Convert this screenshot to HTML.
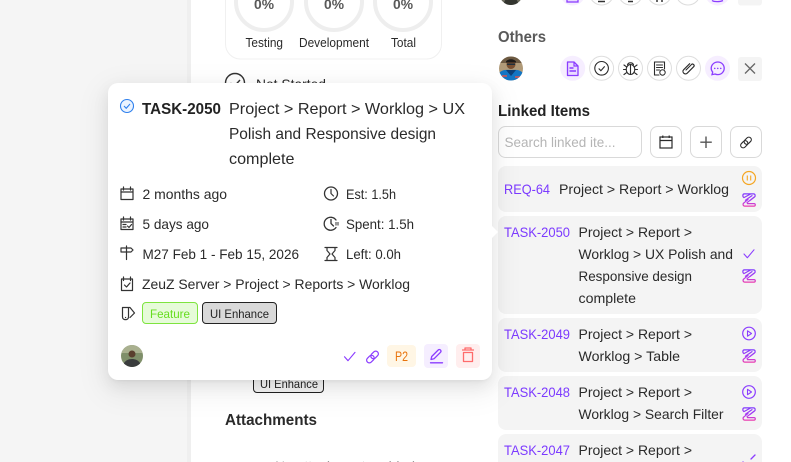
<!DOCTYPE html>
<html><head><meta charset="utf-8"><title>Task popover</title>
<style>
html,body{margin:0;padding:0;width:791px;height:462px;overflow:hidden;background:#fff}
svg{position:absolute;left:0;top:0}
svg svg{position:static}
text{font-family:"Liberation Sans",sans-serif;font-size:14px;fill:#2a2a2a}
.pop{position:absolute;left:108px;top:83px;width:384px;height:297px;background:#fff;border-radius:10px;box-shadow:0 6px 16px rgba(0,0,0,.08),0 3px 6px -4px rgba(0,0,0,.12),0 9px 28px 8px rgba(0,0,0,.05)}
.ic{fill:none;stroke:#333;stroke-width:1.2;stroke-linecap:round;stroke-linejoin:round}
.pu{fill:none;stroke:#8b3dff;stroke-width:1.3;stroke-linecap:round;stroke-linejoin:round}
.id{fill:#7c3aff}
</style></head><body>
<svg width="791" height="462" viewBox="0 0 791 462">
<defs>
<linearGradient id="zg" gradientUnits="userSpaceOnUse" x1="0" y1="0" x2="0" y2="14"><stop offset="0" stop-color="#7c3aff"/><stop offset=".6" stop-color="#b03cf0"/><stop offset="1" stop-color="#f03ca8"/></linearGradient>
<symbol id="z" viewBox="0 0 14 14" overflow="visible"><path d="M2.300 .9H11.500c1.700 0 2.200 2 1 3.100L8 7.500M2.300 .9C.6 .9.3 3.500 1.900 4.600L8.600 1M3.400 7.200 10 2.600M5 9.700 11.800 4.300M6 6.400 1.900 9.900C.5 11 1 13.100 2.600 13.100H12c1.700 0 1.700-2.500 0-2.500H5.500" fill="none" stroke="url(#zg)" stroke-width="1.200" stroke-linecap="round" stroke-linejoin="round"/></symbol>
<symbol id="chk" viewBox="0 0 14 12" overflow="visible"><path d="M1 6 5 10.500 13 1" fill="none" stroke="#8b3dff" stroke-width="1.300" stroke-linecap="round" stroke-linejoin="round"/></symbol>
<symbol id="play" viewBox="0 0 14 14" overflow="visible"><circle cx="7" cy="7" r="6.300" fill="none" stroke="#8b3dff" stroke-width="1.200"/><path d="M5.500 4.300 9.500 7 5.500 9.700Z" fill="none" stroke="#8b3dff" stroke-width="1.100" stroke-linejoin="round"/></symbol>
<clipPath id="clipA1"><circle cx="511" cy="68.500" r="12"/></clipPath>
<clipPath id="clipA2"><circle cx="511" cy="-7" r="12"/></clipPath>
<clipPath id="clipA3"><circle cx="132" cy="356" r="11"/></clipPath>
</defs>

<!-- page background -->
<rect x="0" y="0" width="187" height="462" fill="#f5f5f5"/>
<rect x="187" y="0" width="4" height="462" fill="#efefef"/>

<!-- progress card -->
<rect x="225.500" y="-30" width="216" height="89" rx="15" fill="#fff" stroke="#f0f0f0"/>
<g fill="none" stroke="#eeeeee" stroke-width="4"><circle cx="264" cy="2" r="28"/><circle cx="334" cy="2" r="28"/><circle cx="403" cy="2" r="28"/></g>
<text x="254" y="9" textLength="20" lengthAdjust="spacingAndGlyphs" style="fill:#595959;font-weight:700">0%</text>
<text x="324" y="9" textLength="20" lengthAdjust="spacingAndGlyphs" style="fill:#595959;font-weight:700">0%</text>
<text x="393" y="9" textLength="20" lengthAdjust="spacingAndGlyphs" style="fill:#595959;font-weight:700">0%</text>
<text x="245.500" y="47" textLength="37.500" lengthAdjust="spacingAndGlyphs" style="font-size:12.500px">Testing</text>
<text x="299" y="47" textLength="70" lengthAdjust="spacingAndGlyphs" style="font-size:12.500px">Development</text>
<text x="391" y="47" textLength="25" lengthAdjust="spacingAndGlyphs" style="font-size:12.500px">Total</text>

<!-- not started -->
<circle cx="235" cy="83" r="9.500" fill="none" stroke="#333" stroke-width="1.400"/>
<path d="M230.500 83 234 86.500 240 80" fill="none" stroke="#333" stroke-width="1.400"/>
<text x="256" y="89" textLength="70" lengthAdjust="spacingAndGlyphs">Not Started</text>

<!-- behind popover -->
<rect x="253.500" y="370" width="70" height="22.500" rx="3.500" fill="#f5f5f5" stroke="#222"/>
<text x="260" y="388" textLength="58" lengthAdjust="spacingAndGlyphs" style="font-size:12px;fill:#222">UI Enhance</text>
<text x="225" y="425" textLength="92" lengthAdjust="spacingAndGlyphs" style="font-size:16px;font-weight:700;fill:#2a2a2a">Attachments</text>
<text x="275" y="471" textLength="140" lengthAdjust="spacingAndGlyphs" style="fill:#999">No attachments added</text>

<!-- right column top row -->
<g clip-path="url(#clipA2)"><circle cx="511" cy="-7" r="12" fill="#6b6b5e"/><circle cx="511" cy="4" r="7" fill="#33352f"/></g>
<circle cx="572.700" cy="-7" r="12.500" fill="#f6eeff"/>
<rect x="567" y="-4" width="11" height="6" fill="#e9d9ff" stroke="#8b3dff" stroke-width="1.300"/>
<g fill="#fff" stroke="#dcdcdc"><circle cx="601.600" cy="-7" r="12"/><circle cx="630.500" cy="-7" r="12"/><circle cx="659.500" cy="-7" r="12"/><circle cx="688" cy="-7" r="12"/></g>
<path d="M598 1.500h7M628 1.500h5M656 1h2M661 1h2" stroke="#333" stroke-width="1.500"/>
<circle cx="717.500" cy="-7" r="12.500" fill="#f6eeff"/><path d="M712 .5c2 1.500 8 1.500 11 0" fill="none" stroke="#8b3dff" stroke-width="1.300"/>
<rect x="738" y="-19" width="24" height="24.500" rx="3" fill="#f4f4f4"/>

<text x="498" y="42" textLength="48" lengthAdjust="spacingAndGlyphs" style="font-size:15.500px;font-weight:700;fill:#595959">Others</text>

<!-- others row -->
<g clip-path="url(#clipA1)">
<rect x="499" y="56" width="24" height="25" fill="#b09a78"/>
<rect x="499" y="56" width="24" height="7" fill="#6d5a42"/>
<path d="M499 81v-8c4-4 8-3 12-3s8-1 12 3v8z" fill="#1275c4"/>
<path d="M506 70 511 76 516 70z" fill="#0b3f78"/>
<path d="M502 76h5M515 77h5" stroke="#d9534f" stroke-width="1.500"/>
<circle cx="511" cy="64.500" r="4.500" fill="#7a4f30"/>
<path d="M506 61.500c2-3 8-3 10 0v1h-10z" fill="#1d1a18"/>
<rect x="507" y="63.500" width="8" height="1.500" fill="#20303c"/>
</g>
<circle cx="572.700" cy="68.300" r="12.500" fill="#f6eeff"/>
<path d="M567.500 62h6.500l4 4v9.500h-10.500z" fill="#eadcff" stroke="#8b3dff" stroke-width="1.300" stroke-linejoin="round"/>
<path d="M574 62v4h4" fill="none" stroke="#8b3dff" stroke-width="1.200"/>
<path d="M569.500 68h4M569.500 71h6.500" stroke="#8b3dff" stroke-width="1.500" fill="none"/>
<g fill="#fff" stroke="#dedede"><circle cx="601.600" cy="68.300" r="12"/><circle cx="630.500" cy="68.300" r="12"/><circle cx="659.500" cy="68.300" r="12"/><circle cx="688.500" cy="68.300" r="12"/></g>
<circle cx="601.600" cy="68.300" r="6.800" fill="none" stroke="#2a2a2a" stroke-width="1.100"/>
<path d="M598.700 68.500l2.200 2.200 3.800-4.300" fill="none" stroke="#2a2a2a" stroke-width="1.100"/>
<g fill="none" stroke="#2a2a2a" stroke-width="1.100" stroke-linecap="round">
<ellipse cx="630.500" cy="69.500" rx="4.300" ry="5"/><path d="M627.500 64.700c1-2.500 5-2.500 6 0M630.500 64.700v9.800M624 65l2.500 1.800M637 65l-2.500 1.800M623.500 69.500h2.700M637.500 69.500h-2.700M624 74.500l2.500-1.800M637 74.500l-2.500-1.800"/>
<path d="M664.500 69v-7h-10v13h4.500M656.500 65h6M656.500 67.500h6M656.500 70h3"/>
<circle cx="662.500" cy="72.500" r="2.700" stroke-width="1"/>
<path d="M686 70l5.500-5.500c1.400-1.400 3.600.8 2.200 2.200l-6.500 6.500c-2.300 2.300-5.800-1.200-3.500-3.500l6-6"/>
</g>
<circle cx="717.500" cy="68.300" r="12.500" fill="#f6eeff"/>
<path d="M717.800 62c3.500 0 6.400 2.700 6.400 6.300s-2.900 6.300-6.400 6.300c-1 0-2-.2-2.800-.6l-3 .6.700-2.500c-1-1-1.500-2.400-1.500-3.800 0-3.600 3.100-6.300 6.600-6.300z" fill="none" stroke="#8b3dff" stroke-width="1.300"/>
<path d="M714.700 68.400h.1M717.700 68.400h.1M720.700 68.400h.1" stroke="#8b3dff" stroke-width="1.500" stroke-linecap="round"/>
<rect x="738" y="57" width="24" height="24" rx="3" fill="#f4f4f4"/>
<path d="M745 63.500 755 73.500M755 63.500 745 73.500" stroke="#666" stroke-width="1.300"/>

<text x="498" y="116" textLength="92" lengthAdjust="spacingAndGlyphs" style="font-size:15.500px;font-weight:700;fill:#222">Linked Items</text>
<rect x="498.500" y="126.500" width="143" height="31" rx="7" fill="#fff" stroke="#d9d9d9"/>
<text x="504.500" y="147" textLength="111" lengthAdjust="spacingAndGlyphs" style="fill:#b5b5b5">Search linked ite...</text>
<g fill="#fff" stroke="#d9d9d9"><rect x="650.500" y="126.500" width="31" height="31" rx="7"/><rect x="690.500" y="126.500" width="31" height="31" rx="7"/><rect x="730.500" y="126.500" width="31" height="31" rx="7"/></g>
<g fill="none" stroke="#2a2a2a" stroke-width="1.200">
<rect x="660" y="137" width="12" height="11"/><path d="M660 140.500h12M662.800 135.500v2.500M669.200 135.500v2.500"/>
<path d="M706 136.500v11.500M700.300 142.200h11.500" stroke="#555" stroke-width="1.400"/>
<g transform="rotate(-45 746 142.500)" stroke-width="1.100"><rect x="739.500" y="140" width="8" height="5" rx="2.500"/><rect x="744.500" y="140" width="8" height="5" rx="2.500"/></g>
</g>

<!-- linked cards -->
<g fill="#f4f4f4">
<rect x="498" y="166" width="264" height="46" rx="8"/>
<rect x="498" y="216" width="264" height="98" rx="8"/>
<rect x="498" y="318" width="264" height="54" rx="8"/>
<rect x="498" y="376" width="264" height="54" rx="8"/>
<path d="M498 462v-20a8 8 0 0 1 8-8h248a8 8 0 0 1 8 8v20z"/>
</g>
<text class="id" x="504" y="194" textLength="46" lengthAdjust="spacingAndGlyphs">REQ-64</text>
<text x="559" y="194" textLength="170" lengthAdjust="spacingAndGlyphs">Project &gt; Report &gt; Worklog</text>
<circle cx="749" cy="178" r="6.500" fill="none" stroke="#f5a623" stroke-width="1.200"/>
<path d="M747.300 175.500v5M750.700 175.500v5" stroke="#f5a623" stroke-width="1.100" fill="none"/>
<use href="#z" x="742" y="193" width="14" height="14"/>

<text class="id" x="504" y="237" textLength="66" lengthAdjust="spacingAndGlyphs">TASK-2050</text>
<text x="578.500" y="237" textLength="113.500" lengthAdjust="spacingAndGlyphs">Project &gt; Report &gt;</text>
<text x="578.500" y="259" textLength="154.500" lengthAdjust="spacingAndGlyphs">Worklog &gt; UX Polish and</text>
<text x="578.500" y="281" textLength="113.500" lengthAdjust="spacingAndGlyphs">Responsive design</text>
<text x="578.500" y="303" textLength="57.500" lengthAdjust="spacingAndGlyphs">complete</text>
<use href="#chk" x="743" y="249" width="12" height="10"/>
<use href="#z" x="742" y="269" width="14" height="14"/>

<text class="id" x="504" y="339" textLength="66" lengthAdjust="spacingAndGlyphs">TASK-2049</text>
<text x="578.500" y="339" textLength="113.500" lengthAdjust="spacingAndGlyphs">Project &gt; Report &gt;</text>
<text x="578.500" y="361" textLength="101.500" lengthAdjust="spacingAndGlyphs">Worklog &gt; Table</text>
<use href="#play" x="742" y="326.500" width="14" height="14"/>
<use href="#z" x="742" y="349" width="14" height="14"/>

<text class="id" x="504" y="397" textLength="66" lengthAdjust="spacingAndGlyphs">TASK-2048</text>
<text x="578.500" y="397" textLength="113.500" lengthAdjust="spacingAndGlyphs">Project &gt; Report &gt;</text>
<text x="578.500" y="419" textLength="145" lengthAdjust="spacingAndGlyphs">Worklog &gt; Search Filter</text>
<use href="#play" x="742" y="385" width="14" height="14"/>
<use href="#z" x="742" y="407" width="14" height="14"/>

<text class="id" x="504" y="455" textLength="66" lengthAdjust="spacingAndGlyphs">TASK-2047</text>
<text x="578.500" y="455" textLength="113.500" lengthAdjust="spacingAndGlyphs">Project &gt; Report &gt;</text>
<path d="M743 460 745 462M751 457 755 453" fill="none" stroke="#8b3dff" stroke-width="1.300" stroke-linecap="round" transform="translate(0 2)"/>
</svg>

<div class="pop"></div>

<svg width="791" height="462" viewBox="0 0 791 462">
<path d="M491 225 498 232 491 239Z" fill="#fff"/>

<!-- title -->
<circle cx="127" cy="106" r="6.500" fill="#eaf3ff" stroke="#2f80ed" stroke-width="1.100"/>
<path d="M124 106l2.200 2.300 3.800-4.300" fill="none" stroke="#2f80ed" stroke-width="1.100"/>
<text x="142" y="114" textLength="79" lengthAdjust="spacingAndGlyphs" style="font-size:16px;font-weight:700;fill:#222">TASK-2050</text>
<text x="229" y="114" textLength="236" lengthAdjust="spacingAndGlyphs" style="font-size:16px">Project &gt; Report &gt; Worklog &gt; UX</text>
<text x="229" y="139" textLength="207" lengthAdjust="spacingAndGlyphs" style="font-size:16px">Polish and Responsive design</text>
<text x="229" y="164" textLength="65.500" lengthAdjust="spacingAndGlyphs" style="font-size:16px">complete</text>

<!-- meta left -->
<g class="ic">
<rect x="121" y="189" width="12" height="10.500"/><path d="M121 192h12M123.500 187v3M130.500 187v3"/>
<rect x="121" y="219" width="12" height="10.500"/><path d="M121 222h12M123.500 217v3M130.500 217v3M123 224.500h3M123 227h3M127.500 226l1.500 1.500 2.500-3"/>
<path d="M126.500 246v13.500M121 248h10l2 2-2 2h-10z"/>
<rect x="121.500" y="279" width="11" height="11.500"/><path d="M123.500 277v3.500M130.500 277v3.500M124.500 285l2 2 3.500-4"/>
<path d="M122.500 307.500h7.500l4.500 5.500-4.500 4.500M122.500 307.500v9.500c0 3.500 6 3.500 6 0v-9.500"/>
<path d="M125.500 317.500h.1"/>
</g>
<text x="142.500" y="199" textLength="84.500" lengthAdjust="spacingAndGlyphs">2 months ago</text>
<text x="142.500" y="229" textLength="66.500" lengthAdjust="spacingAndGlyphs">5 days ago</text>
<text x="142.500" y="259" textLength="156.500" lengthAdjust="spacingAndGlyphs">M27 Feb 1 - Feb 15, 2026</text>
<text x="142" y="289" textLength="268" lengthAdjust="spacingAndGlyphs">ZeuZ Server &gt; Project &gt; Reports &gt; Worklog</text>

<rect x="142.500" y="302.500" width="55" height="21" rx="3.500" fill="#e6fbd9" stroke="#7ee43f"/>
<text x="150" y="318" textLength="40" lengthAdjust="spacingAndGlyphs" style="font-size:12px;fill:#66dd1f">Feature</text>
<rect x="202.500" y="302.500" width="74" height="21" rx="3.500" fill="#d9d9d9" stroke="#222"/>
<text x="210" y="318" textLength="59" lengthAdjust="spacingAndGlyphs" style="font-size:12px;fill:#222">UI Enhance</text>

<!-- meta right -->
<g class="ic">
<circle cx="331" cy="193.500" r="6.500" stroke-width="1.300"/><path d="M331 189.500v4l2.500 2.500"/>
<path d="M336 220a6.500 6.500 0 1 0 0 7.500M331 219.500v4l2.500 2.500" stroke-width="1.300"/>
<path d="M325 247.500h12M325 260.500h12M327 247.500v3l3 3.500-3 3.500v2.500M335 247.500v3l-3 3.500 3 3.500v2.500"/>
</g>
<path d="M335 222h4v3.500h-4z" fill="#999"/>
<text x="346" y="199" textLength="50" lengthAdjust="spacingAndGlyphs">Est: 1.5h</text>
<text x="346" y="229" textLength="68" lengthAdjust="spacingAndGlyphs">Spent: 1.5h</text>
<text x="346" y="259" textLength="55" lengthAdjust="spacingAndGlyphs">Left: 0.0h</text>

<!-- footer -->
<g clip-path="url(#clipA3)">
<rect x="121" y="345" width="22" height="22" fill="#7f8f6a"/>
<rect x="121" y="345" width="22" height="8" fill="#a9b08f"/>
<path d="M124 367v-4c2-3 5-4 8-4s6 1 8 4v4z" fill="#3a3c3d"/>
<circle cx="132" cy="354" r="3.500" fill="#5a3f2e"/>
</g>
<use href="#chk" x="343.500" y="351.500" width="12.500" height="10.500"/>
<g transform="rotate(-45 372.500 357)" fill="none" stroke="#8b3dff" stroke-width="1.200"><rect x="365.300" y="354.300" width="8.500" height="5.400" rx="2.700"/><rect x="371.200" y="354.300" width="8.500" height="5.400" rx="2.700"/></g>
<rect x="387" y="345" width="29" height="22" rx="4" fill="#fff6e5"/>
<text x="395" y="361" textLength="13" lengthAdjust="spacingAndGlyphs" style="fill:#e8730c">P2</text>
<rect x="424" y="344" width="24" height="24" rx="4" fill="#f5eeff"/>
<path class="pu" d="M431 359.500l.7-3 6.500-6.500c.7-.7 1.700-.7 2.300 0s.7 1.600 0 2.300L434 358.800zM430.500 362.800h12"/>
<rect x="456" y="344" width="24" height="24" rx="4" fill="#ffeeee"/>
<path d="M462 350h12M465 350v-2h6v2M463.500 352.500h9v9h-9z" fill="none" stroke="#ff6b6b" stroke-width="1.300" stroke-linejoin="round"/>
</svg>
</body></html>
